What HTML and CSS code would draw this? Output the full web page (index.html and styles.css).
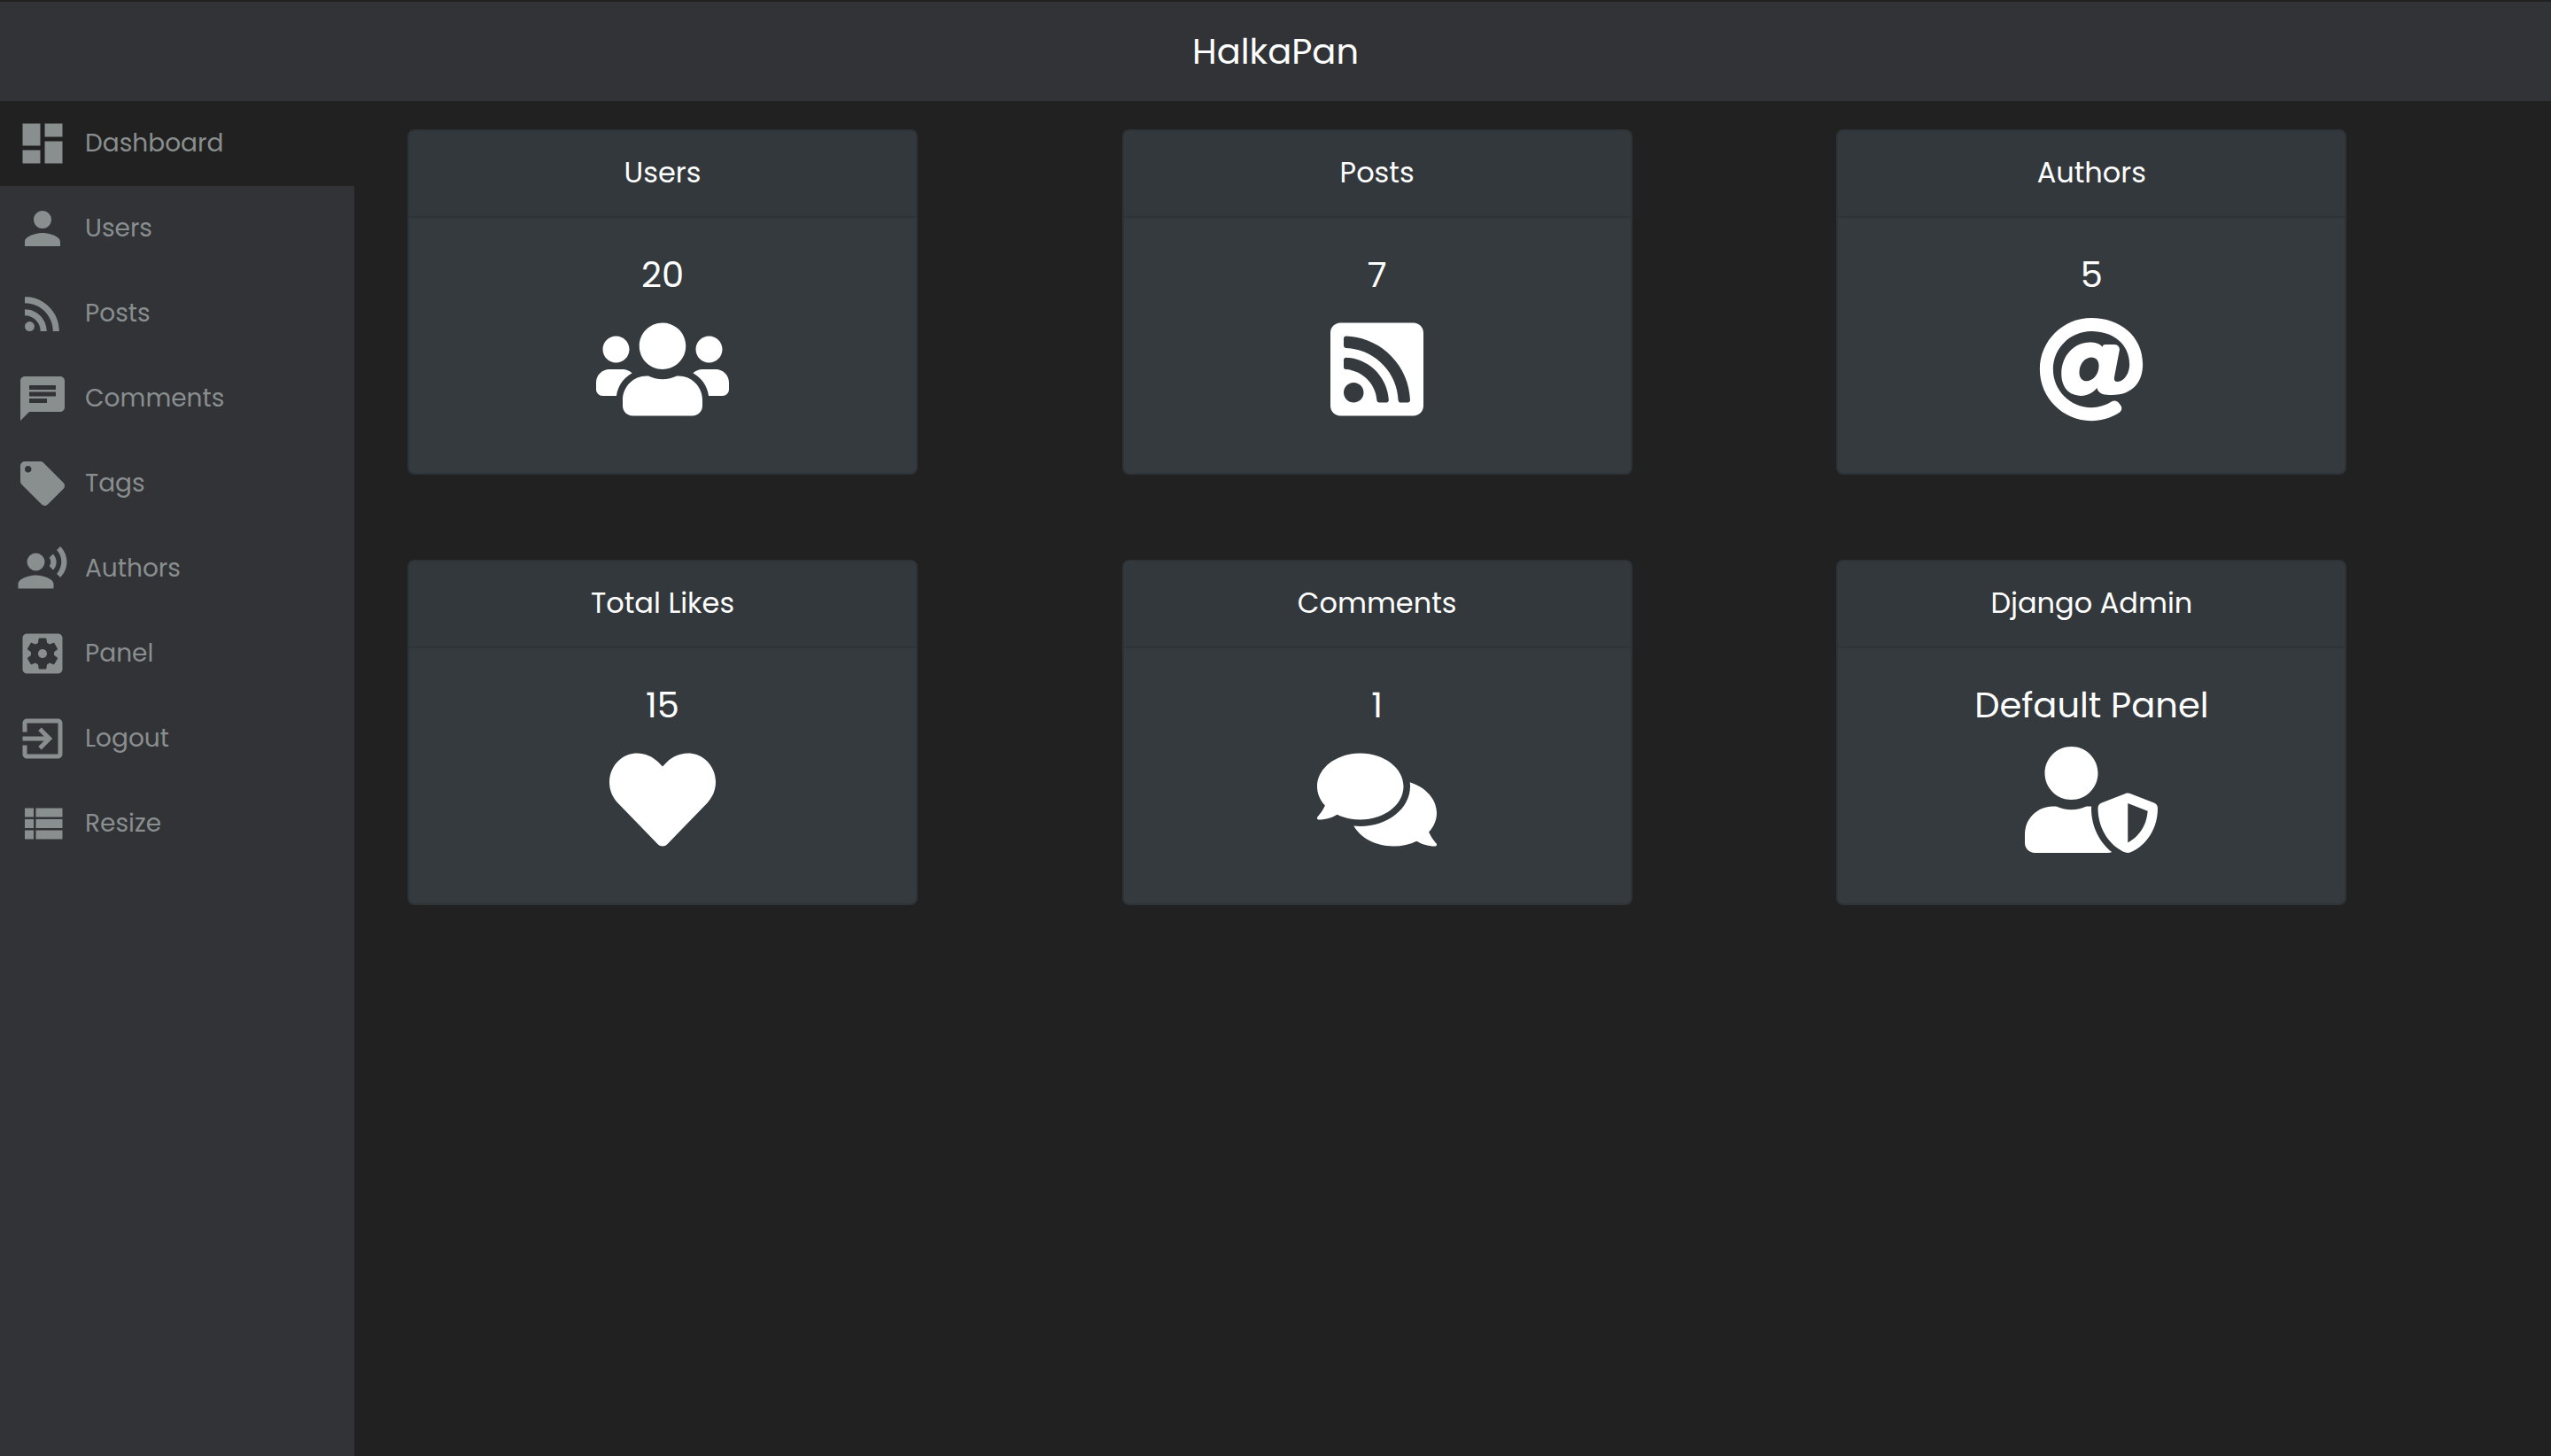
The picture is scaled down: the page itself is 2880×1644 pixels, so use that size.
FILE: index.html
```html
<!DOCTYPE html>
<html lang="en">
<head>
<meta charset="utf-8">
<meta name="viewport" content="width=device-width, initial-scale=1">
<title>HalkaPan</title>
<link rel="stylesheet" href="styles.css">
</head>
<body>
<header class="topbar"><h1 class="brand">HalkaPan</h1></header>
<div class="layout">
  <nav class="sidebar" aria-label="Main">
    <a class="nav-item active" href="#dashboard"><svg class="nav-icon" viewBox="0 0 24 24" aria-hidden="true"><path d="M3 13h8V3H3v10zm0 8h8v-6H3v6zm10 0h8V11h-8v10zm0-18v6h8V3h-8z"/></svg><span>Dashboard</span></a>
    <a class="nav-item" href="#users"><svg class="nav-icon" viewBox="0 0 24 24" aria-hidden="true"><path d="M12 12c2.21 0 4-1.79 4-4s-1.79-4-4-4-4 1.79-4 4 1.79 4 4 4zm0 2c-2.67 0-8 1.34-8 4v2h16v-2c0-2.66-5.33-4-8-4z"/></svg><span>Users</span></a>
    <a class="nav-item" href="#posts"><svg class="nav-icon" viewBox="0 0 24 24" aria-hidden="true"><circle cx="6.18" cy="17.82" r="2.18"/><path d="M4 4.44v2.83c7.03 0 12.73 5.7 12.73 12.73h2.83c0-8.59-6.97-15.56-15.56-15.56zm0 5.66v2.83c3.9 0 7.07 3.17 7.07 7.07h2.83c0-5.47-4.43-9.9-9.9-9.9z"/></svg><span>Posts</span></a>
    <a class="nav-item" href="#comments"><svg class="nav-icon" viewBox="0 0 24 24" aria-hidden="true"><path d="M20 2H4c-1.1 0-1.99.9-1.99 2L2 22l4-4h14c1.1 0 2-.9 2-2V4c0-1.1-.9-2-2-2zM6 9h12v2H6V9zm8 5H6v-2h8v2zm4-6H6V6h12v2z"/></svg><span>Comments</span></a>
    <a class="nav-item" href="#tags"><svg class="nav-icon" viewBox="0 0 24 24" aria-hidden="true"><path d="M21.41 11.58l-9-9C12.05 2.22 11.55 2 11 2H4c-1.1 0-2 .9-2 2v7c0 .55.22 1.05.59 1.42l9 9c.36.36.86.58 1.41.58.55 0 1.05-.22 1.41-.59l7-7c.37-.36.59-.86.59-1.41 0-.55-.23-1.06-.59-1.42zM5.5 7C4.67 7 4 6.33 4 5.5S4.67 4 5.5 4 7 4.67 7 5.5 6.33 7 5.5 7z"/></svg><span>Tags</span></a>
    <a class="nav-item" href="#authors"><svg class="nav-icon" viewBox="0 0 24 24" aria-hidden="true"><circle cx="9" cy="9" r="4"/><path d="M9 15c-2.67 0-8 1.34-8 4v2h16v-2c0-2.66-5.33-4-8-4zm7.76-9.64l-1.68 1.69c.84 1.18.84 2.71 0 3.89l1.68 1.69c2.02-2.02 2.02-5.07 0-7.27zM20.07 2l-1.63 1.63c2.77 3.02 2.77 7.56 0 10.74L20.07 16c3.9-3.89 3.91-9.95 0-14z"/></svg><span>Authors</span></a>
    <a class="nav-item" href="#panel"><svg class="nav-icon" viewBox="0 0 24 24" aria-hidden="true"><path d="M12 10c-1.1 0-2 .9-2 2s.9 2 2 2 2-.9 2-2-.9-2-2-2zm7-7H5c-1.11 0-2 .9-2 2v14c0 1.1.89 2 2 2h14c1.11 0 2-.9 2-2V5c0-1.1-.89-2-2-2zm-1.75 9c0 .23-.02.46-.05.68l1.48 1.16c.13.11.17.3.08.45l-1.4 2.42c-.09.15-.27.21-.43.15l-1.74-.7c-.36.28-.76.51-1.18.69l-.26 1.85c-.03.17-.18.3-.35.3h-2.8c-.17 0-.32-.13-.35-.29l-.26-1.85c-.43-.18-.82-.41-1.18-.69l-1.74.7c-.16.06-.34 0-.43-.15l-1.4-2.42c-.09-.15-.05-.34.08-.45l1.48-1.16c-.03-.23-.05-.46-.05-.69 0-.23.02-.46.05-.68l-1.48-1.16c-.13-.11-.17-.3-.08-.45l1.4-2.42c.09-.15.27-.21.43-.15l1.74.7c.36-.28.76-.51 1.18-.69l.26-1.85c.03-.17.18-.3.35-.3h2.8c.17 0 .32.13.35.29l.26 1.85c.43.18.82.41 1.18.69l1.74-.7c.16-.06.34 0 .43.15l1.4 2.42c.09.15.05.34-.08.45l-1.48 1.16c.03.23.05.46.05.69z"/></svg><span>Panel</span></a>
    <a class="nav-item" href="#logout"><svg class="nav-icon" viewBox="0 0 24 24" aria-hidden="true"><path d="M10.09 15.59L11.5 17l5-5-5-5-1.41 1.41L12.67 11H3v2h9.67l-2.58 2.59zM19 3H5c-1.11 0-2 .9-2 2v4h2V5h14v14H5v-4H3v4c0 1.1.89 2 2 2h14c1.1 0 2-.9 2-2V5c0-1.1-.9-2-2-2z"/></svg><span>Logout</span></a>
    <button class="nav-item" type="button"><svg class="nav-icon" viewBox="0 0 24 24" aria-hidden="true"><path d="M4 14h4v-4H4v4zm0 5h4v-4H4v4zM4 9h4V5H4v4zm5 5h12v-4H9v4zm0 5h12v-4H9v4zM9 5v4h12V5H9z"/></svg><span>Resize</span></button>
  </nav>
  <main class="cards">
    <section class="card">
      <h2 class="card-title">Users</h2>
      <div class="card-body"><p class="card-value">20</p>
      <svg class="card-icon" viewBox="0 0 640 512" aria-hidden="true"><path d="M96 224c35.3 0 64-28.7 64-64s-28.7-64-64-64-64 28.7-64 64 28.7 64 64 64zm448 0c35.3 0 64-28.7 64-64s-28.7-64-64-64-64 28.7-64 64 28.7 64 64 64zm32 32h-64c-17.6 0-33.5 7.1-45.1 18.6 40.3 22.1 68.9 62 75.1 109.4h66c17.7 0 32-14.3 32-32v-32c0-35.3-28.7-64-64-64zm-256 0c61.9 0 112-50.1 112-112S381.9 32 320 32 208 82.1 208 144s50.1 112 112 112zm76.8 32h-8.3c-20.8 10-43.9 16-68.5 16s-47.6-6-68.5-16h-8.3C179.6 288 128 339.6 128 403.2V432c0 26.5 21.5 48 48 48h288c26.5 0 48-21.5 48-48v-28.8c0-63.6-51.6-115.2-115.2-115.2zm-223.7-13.4C161.5 263.1 145.6 256 128 256H64c-35.3 0-64 28.7-64 64v32c0 17.7 14.3 32 32 32h65.9c6.3-47.4 34.9-87.3 75.2-109.4z"/></svg></div>
    </section>
    <section class="card">
      <h2 class="card-title">Posts</h2>
      <div class="card-body"><p class="card-value">7</p>
      <svg class="card-icon" viewBox="0 0 448 512" aria-hidden="true"><path d="M400 32H48C21.49 32 0 53.49 0 80v352c0 26.51 21.49 48 48 48h352c26.51 0 48-21.49 48-48V80c0-26.51-21.49-48-48-48zM112 416c-26.51 0-48-21.49-48-48s21.49-48 48-48 48 21.49 48 48-21.49 48-48 48zm157.533 0h-34.335c-6.011 0-11.051-4.636-11.442-10.634-5.214-80.05-69.243-143.92-149.123-149.123-5.997-.39-10.633-5.431-10.633-11.441v-34.335c0-6.535 5.468-11.777 11.994-11.425 110.546 5.974 198.997 94.536 204.964 204.964.352 6.526-4.89 11.994-11.425 11.994zm103.027 0h-34.334c-6.161 0-11.175-4.882-11.427-11.038-5.598-136.535-115.204-246.161-251.76-251.76C68.882 152.949 64 147.935 64 141.774V107.44c0-6.454 5.338-11.664 11.787-11.432 167.83 6.025 302.21 141.191 308.205 308.205.232 6.449-4.978 11.787-11.432 11.787z"/></svg></div>
    </section>
    <section class="card">
      <h2 class="card-title">Authors</h2>
      <div class="card-body"><p class="card-value">5</p>
      <svg class="card-icon" viewBox="0 0 512 512" aria-hidden="true"><path d="M256 8C118.941 8 8 118.919 8 256c0 137.059 110.919 248 248 248 48.154 0 95.342-14.14 135.408-40.223 12.005-7.815 14.625-24.288 5.552-35.372l-10.177-12.433c-7.671-9.371-21.179-11.667-31.373-5.129C325.92 429.757 291.314 440 256 440c-101.458 0-184-82.542-184-184S154.542 72 256 72c100.139 0 184 57.619 184 160 0 38.786-21.093 79.742-58.17 83.693-17.349-.454-16.91-12.857-13.476-30.024l23.433-121.11C394.653 149.75 383.308 136 368.225 136h-44.981a13.518 13.518 0 0 0-13.432 11.993l-.01.092c-14.697-17.901-40.448-21.775-59.971-21.775-74.58 0-137.831 62.234-137.831 151.46 0 65.303 36.785 105.87 96 105.87 26.984 0 57.369-15.637 74.991-38.333 9.522 34.104 40.613 34.104 70.71 34.104C462.609 379.41 504 307.798 504 232 504 95.653 394.023 8 256 8zm-21.68 304.43c-22.249 0-36.07-15.623-36.07-40.771 0-44.993 30.779-72.729 58.63-72.729 22.292 0 35.601 15.241 35.601 40.77 0 45.061-33.875 72.73-58.161 72.73z"/></svg></div>
    </section>
    <section class="card">
      <h2 class="card-title">Total Likes</h2>
      <div class="card-body"><p class="card-value">15</p>
      <svg class="card-icon" viewBox="0 0 512 512" aria-hidden="true"><path d="M462.3 62.6C407.5 15.9 326 24.3 275.7 76.2L256 96.5l-19.7-20.3C186.1 24.3 104.5 15.9 49.7 62.6c-62.8 53.6-66.1 149.8-9.9 207.9l193.5 199.8c12.5 12.9 32.8 12.9 45.3 0l193.5-199.8c56.3-58.1 53-154.3-9.8-207.9z"/></svg></div>
    </section>
    <section class="card">
      <h2 class="card-title">Comments</h2>
      <div class="card-body"><p class="card-value">1</p>
      <svg class="card-icon" viewBox="0 0 576 512" aria-hidden="true"><path d="M416 192c0-88.4-93.1-160-208-160S0 103.6 0 192c0 34.3 14.1 65.9 38 92-13.4 30.2-35.5 54.2-35.8 54.5-2.2 2.3-2.8 5.7-1.5 8.7S4.8 352 8 352c36.6 0 66.9-12.3 88.7-25 32.2 15.7 70.3 25 111.3 25 114.9 0 208-71.6 208-160zm122 220c23.9-26 38-57.7 38-92 0-66.9-53.5-124.2-129.3-148.1.9 6.6 1.3 13.3 1.3 20.1 0 105.9-107.7 192-240 192-10.8 0-21.3-.8-31.7-1.9C207.8 439.6 281.8 480 368 480c41 0 79.1-9.2 111.3-25 21.8 12.7 52.1 25 88.7 25 3.2 0 6.1-1.9 7.3-4.8 1.3-2.9.7-6.3-1.5-8.7-.3-.3-22.4-24.2-35.8-54.5z"/></svg></div>
    </section>
    <section class="card">
      <h2 class="card-title">Django Admin</h2>
      <div class="card-body"><p class="card-value">Default Panel</p>
      <svg class="card-icon" viewBox="0 0 640 512" aria-hidden="true"><path d="M622.3 271.1l-115.2-45c-4.1-1.6-12.6-3.7-22.2 0l-115.2 45c-10.7 4.2-17.7 14-17.7 24.9 0 111.6 68.7 188.8 132.9 213.9 9.6 3.7 18 1.6 22.2 0C558.4 489.9 640 420.5 640 296c0-10.9-7-20.7-17.7-24.9zM496 462.4V273.3l95.5 37.3c-5.6 87.1-60.9 135.4-95.5 151.8zM224 256c70.7 0 128-57.3 128-128S294.7 0 224 0 96 57.3 96 128s57.3 128 128 128zm96 40c0-2.5.8-4.8 1.1-7.2-2.5-.1-4.9-.8-7.5-.8h-16.7c-22.2 10.2-46.9 16-72.9 16s-50.6-5.8-72.9-16h-16.7C60.2 288 0 348.2 0 422.4V464c0 26.5 21.5 48 48 48h352c6.8 0 13.3-1.5 19.2-4-54-42.9-99.2-116.7-99.2-212z"/></svg></div>
    </section>
  </main>
</div>
</body>
</html>
```
FILE: styles.css
```css
*, *::before, *::after { box-sizing: border-box; }

body {
  display: flex;
  flex-direction: column;
  min-height: 100vh;
  margin: 0;
  background: #212121;
  color: #fff;
  font-family: Poppins, Inter, "Open Sans", sans-serif;
}

.topbar {
  padding: 32px;
  border-top: 2px solid #212121;
  background: #323337;
  text-align: center;
}

.brand {
  margin: 0;
  font-size: 40px;
  font-weight: 400;
  line-height: 48px;
}

.layout {
  display: flex;
  flex: 1;
}

.sidebar {
  display: flex;
  flex: 0 0 400px;
  flex-direction: column;
  background: #323337;
}

.nav-item {
  display: flex;
  align-items: center;
  gap: 18px;
  padding: 18px;
  border: 0;
  background: none;
  color: #898e8e;
  font: inherit;
  font-size: 28px;
  line-height: 60px;
  text-align: left;
  text-decoration: none;
  cursor: pointer;
}

.nav-item.active { background: #212121; }

.nav-icon {
  width: 60px;
  height: 60px;
  fill: currentColor;
}

.cards {
  display: grid;
  flex: 1;
  grid-template-columns: repeat(3, 1fr);
  align-content: start;
  row-gap: 96px;
  padding: 32px 0 32px 60px;
}

.card {
  width: 100%;
  max-width: 576px;
  border: 2px solid #2e3338;
  border-radius: 8px;
  background: #353a3f;
  overflow: hidden;
}

.card-title {
  margin: 0;
  padding: 23px 40px 25px;
  border-bottom: 2px solid #2e3338;
  background: #33383d;
  font-size: 32px;
  font-weight: 400;
  line-height: 48px;
  text-align: center;
}

.card-body {
  display: flex;
  flex-direction: column;
  align-items: center;
  gap: 23px;
  padding: 40px 40px 57px;
}

.card-value {
  margin: 0;
  font-size: 40px;
  font-weight: 400;
  line-height: 48px;
}

.card-icon {
  height: 120px;
  fill: currentColor;
}
```
